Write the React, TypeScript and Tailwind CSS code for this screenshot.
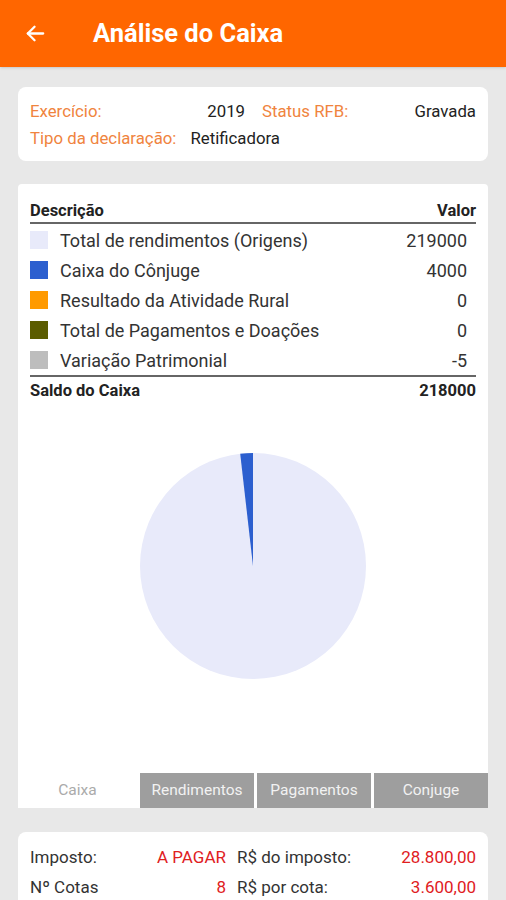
import React from "react";

const ITEMS = [
  { label: "Total de rendimentos (Origens)", value: "219000", color: "bg-[#e8eafa]" },
  { label: "Caixa do Cônjuge", value: "4000", color: "bg-[#2c5fcf]" },
  { label: "Resultado da Atividade Rural", value: "0", color: "bg-[#ff9a00]" },
  { label: "Total de Pagamentos e Doações", value: "0", color: "bg-[#5b5c00]" },
  { label: "Variação Patrimonial", value: "-5", color: "bg-[#bdbdbd]" },
];

function Pie() {
  // fatia azul ~ 4000 / 223000 do total
  const cx = 113;
  const cy = 113;
  const r = 113;
  const a = (6.5 * Math.PI) / 180;
  const x = cx - r * Math.sin(a);
  const y = cy - r * Math.cos(a);
  return (
    <svg width="226" height="226" viewBox="0 0 226 226">
      <circle cx={cx} cy={cy} r={r} fill="#e8eafa" />
      <path d={`M${cx} ${cy} L${x} ${y} A${r} ${r} 0 0 1 ${cx} ${cy - r} Z`} fill="#2c5fcf" />
    </svg>
  );
}

export default function App() {
  return (
    <main className="min-h-[900px] bg-[#e8e8e8] font-['Roboto',sans-serif] text-[#222]">
      {/* header */}
      <header className="h-[67px] bg-[#ff6600] flex items-center px-6 shadow-sm">
        <svg width="23" height="23" viewBox="0 0 24 24" fill="none" stroke="white" strokeWidth="2.4" strokeLinecap="round" strokeLinejoin="round">
          <path d="M20 12H4" />
          <path d="M11 5l-7 7 7 7" />
        </svg>
        <h1 className="ml-[46px] text-[25.5px] font-bold text-white">Análise do Caixa</h1>
      </header>

      {/* info declaração */}
      <section className="mx-[18px] mt-5 bg-white rounded-lg px-3 pt-[11px] pb-[9px] text-[16.8px] leading-[27px]">
        <div className="flex">
          <span className="w-[140px] text-[#f0843e]">Exercício:</span>
          <span className="w-[75px] text-right">2019</span>
          <span className="ml-[17px] text-[#f0843e]">Status RFB:</span>
          <span className="flex-1 text-right">Gravada</span>
        </div>
        <div className="flex">
          <span className="text-[#f0843e]">Tipo da declaração:</span>
          <span className="ml-[14px]">Retificadora</span>
        </div>
      </section>

      {/* tabela + gráfico */}
      <section className="mx-[18px] mt-[23px] bg-white rounded-t-sm">
        <div className="px-3 pt-[18px]">
          <div className="flex justify-between text-[16.5px] leading-[18px] font-bold pb-[2px] border-b-2 border-[#666]">
            <span>Descrição</span>
            <span>Valor</span>
          </div>
          <div className="pr-[9px] pt-[1px]">
            {ITEMS.map((it) => (
              <div key={it.label} className="h-[30px] flex items-center text-[18px] text-[#333]">
                <span className={`w-[18px] h-[18px] ${it.color}`} />
                <span className="ml-3">{it.label}</span>
                <span className="ml-auto">{it.value}</span>
              </div>
            ))}
          </div>
          <div className="flex justify-between text-[16.5px] leading-[18px] font-bold pt-[5px] border-t-2 border-[#666]">
            <span>Saldo do Caixa</span>
            <span>218000</span>
          </div>
        </div>

        <div className="flex justify-center pt-[53px] pb-[94px]">
          <Pie />
        </div>

        <div className="grid grid-cols-[119px_1fr_1fr_1fr] gap-x-[3px] h-[35px] text-[15.5px]">
          <div className="bg-white text-[#aaa] flex items-center justify-center">Caixa</div>
          <div className="bg-[#9e9e9e] text-[#f2f2f2] flex items-center justify-center">Rendimentos</div>
          <div className="bg-[#9e9e9e] text-[#f2f2f2] flex items-center justify-center">Pagamentos</div>
          <div className="bg-[#9e9e9e] text-[#f2f2f2] flex items-center justify-center">Conjuge</div>
        </div>
      </section>

      {/* imposto */}
      <section className="mx-[18px] mt-6 bg-white rounded-lg px-3 pt-[10px] pb-3 text-[17px] leading-[30px] text-[#333]">
        <div className="flex">
          <span className="w-[88px]">Imposto:</span>
          <span className="w-[108px] text-right text-[#e0201e]">A PAGAR</span>
          <span className="ml-[11px]">R$ do imposto:</span>
          <span className="flex-1 text-right text-[#e0201e]">28.800,00</span>
        </div>
        <div className="flex">
          <span className="w-[88px]">Nº Cotas</span>
          <span className="w-[108px] text-right text-[#e0201e]">8</span>
          <span className="ml-[11px]">R$ por cota:</span>
          <span className="flex-1 text-right text-[#e0201e]">3.600,00</span>
        </div>
      </section>
    </main>
  );
}
